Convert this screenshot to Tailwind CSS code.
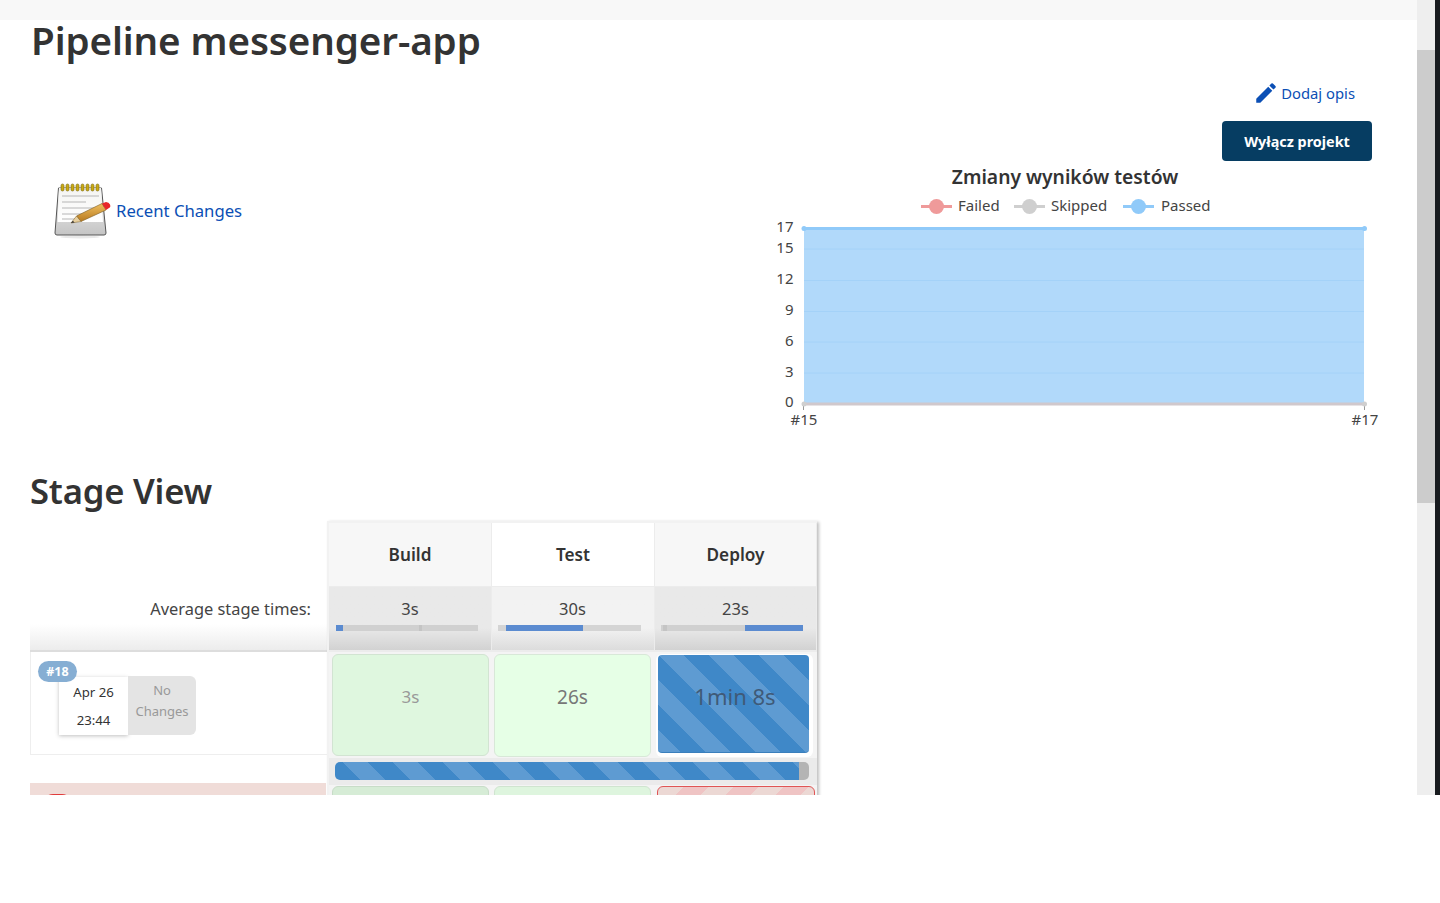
<!DOCTYPE html>
<html lang="pl">
<head>
    <meta charset="UTF-8">
    <meta name="viewport" content="width=device-width, initial-scale=1.0">
    <title>Pipeline messenger-app</title>
    <script src="https://cdn.jsdelivr.net/npm/@tailwindcss/browser@4"></script>
</head>
<body class="bg-white text-[#333] [font-family:'Noto_Sans',sans-serif]">
    <div class="flex h-[795px] overflow-hidden">
        <main class="w-[1417px] shrink-0">
            <div class="h-5 bg-[#f8f8f8]"></div>

            <h1 class="pl-[31px] h-[42px] text-[38.600px] leading-[40px] font-semibold tracking-[-0.1px]">Pipeline messenger-app</h1>

            <!-- Górna część: zmiany + wykres -->
            <div class="flex h-[368px]">
                <div class="w-[770px] pl-[54px] pt-[121px]">
                    <a href="#" class="flex items-center gap-[8px] text-[#0b4fb5] text-[16.700px] leading-[24px]">
                        <svg class="w-[54px] h-[56px] overflow-visible" viewBox="0 0 54 56">
                            <defs>
                                <linearGradient id="paper" x1="0" y1="0" x2="0" y2="1">
                                    <stop offset="0" stop-color="#f4f4f2"/>
                                    <stop offset="1" stop-color="#fff"/>
                                </linearGradient>
                                <linearGradient id="base" x1="0" y1="0" x2="0" y2="1">
                                    <stop offset="0" stop-color="#f6f6f6"/>
                                    <stop offset="1" stop-color="#c4c4c4"/>
                                </linearGradient>
                                <linearGradient id="pencil" x1="0" y1="0" x2="0" y2="1">
                                    <stop offset="0" stop-color="#f0c060"/>
                                    <stop offset="1" stop-color="#b87a20"/>
                                </linearGradient>
                            </defs>
                            <ellipse cx="26" cy="54" rx="20" ry="1.500" fill="#e8e8e8"/>
                            <path d="M4.500 5h43l4.500 45q0 2-2 2H3q-2 0-2-2z" fill="url(#base)" stroke="#555"/>
                            <path d="M5 5h42l2 34H3.500z" fill="url(#paper)"/>
                            <g fill="#c9a914" stroke="#7a6a10" stroke-width=".6">
                                <rect x="7" y="1" width="3" height="7" rx="1.500"/>
                                <rect x="12" y="1" width="3" height="7" rx="1.500"/>
                                <rect x="17" y="1" width="3" height="7" rx="1.500"/>
                                <rect x="22" y="1" width="3" height="7" rx="1.500"/>
                                <rect x="27" y="1" width="3" height="7" rx="1.500"/>
                                <rect x="32" y="1" width="3" height="7" rx="1.500"/>
                                <rect x="37" y="1" width="3" height="7" rx="1.500"/>
                                <rect x="42" y="1" width="3" height="7" rx="1.500"/>
                            </g>
                            <g stroke="#b5b5b5" stroke-width="1.200">
                                <path d="M8 13h37M8 19h24M8 25h37M8 31h28M8 36h20"/>
                            </g>
                            <path d="M22.500 33L48 20.500l4 6.500L27 38.500z" fill="url(#pencil)" stroke="#7a5a20" stroke-width=".6"/>
                            <path d="M17 40l5.500-7 4.500 5.500z" fill="#e8d0a0" stroke="#7a5a20" stroke-width=".5"/>
                            <path d="M17 40l1.800-2.300 1.800 1.700z" fill="#333"/>
                            <path d="M48 20.500l4-1.500q3 0 4 2.500t-1 3.500l-3 2z" fill="#e8262a"/>
                        </svg>
                        Recent Changes
                    </a>
                </div>
                <div class="w-[620px]">
                    <div class="flex justify-end pr-[35px] h-[44px] items-end">
                        <a href="#" class="flex items-center gap-[2px] text-[#0b4fb5] text-[14.800px] leading-[20px]">
                            <svg class="w-[26px] h-[26px]" viewBox="0 0 24 24" fill="#0b4fb5">
                                <path d="M3 17.250V21h3.750L17.810 9.940l-3.750-3.750L3 17.250zM20.710 7.040a1 1 0 000-1.410l-2.340-2.340a1 1 0 00-1.410 0l-1.830 1.830 3.750 3.750 1.830-1.830z"/>
                            </svg>
                            Dodaj opis
                        </a>
                    </div>
                    <div class="flex justify-end pr-[18px] mt-[15px]">
                        <button class="w-[150px] h-[40px] pt-[1px] rounded-[4px] bg-[#063d62] text-white text-[14.400px] font-bold">Wyłącz projekt</button>
                    </div>
                    <svg class="block w-[620px] h-[270px] mt-[-1px]" viewBox="770 160 620 270" fill="#444" font-size="15">
                        <text x="1065" y="184" text-anchor="middle" font-size="19.300" font-weight="600" fill="#333">Zmiany wyników testów</text>

                        <path d="M921 206.500h31" stroke="#ef9a9a" stroke-width="3"/>
                        <circle cx="936.500" cy="206.500" r="7.500" fill="#ef9a9a"/>
                        <text x="958" y="211">Failed</text>
                        <path d="M1014 206.500h31" stroke="#cfcfcf" stroke-width="3"/>
                        <circle cx="1029.500" cy="206.500" r="7.500" fill="#cfcfcf"/>
                        <text x="1051" y="211">Skipped</text>
                        <path d="M1123 206.500h31" stroke="#90caf9" stroke-width="3"/>
                        <circle cx="1138.500" cy="206.500" r="7.500" fill="#90caf9"/>
                        <text x="1161" y="211">Passed</text>

                        <rect x="804" y="228" width="560" height="176" fill="#b1d9fa"/>
                        <path d="M804 249h560M804 280.500h560M804 311.500h560M804 342h560M804 373h560" stroke="#a4d2f8"/>
                        <path d="M804 228.500h560" stroke="#90caf9" stroke-width="3"/>
                        <path d="M804 404h560" stroke="#d0c8cc" stroke-width="3"/>
                        <path d="M803.500 404v6M1364.500 404v6" stroke="#999"/>
                        <circle cx="804" cy="228.500" r="2.500" fill="#90caf9"/>
                        <circle cx="1364.500" cy="228.500" r="2.500" fill="#90caf9"/>
                        <circle cx="804" cy="404" r="2.500" fill="#cfcfcf"/>
                        <circle cx="1364.500" cy="404" r="2.500" fill="#cfcfcf"/>

                        <g text-anchor="end">
                            <text x="793.500" y="232">17</text>
                            <text x="793.500" y="253">15</text>
                            <text x="793.500" y="284">12</text>
                            <text x="793.500" y="315">9</text>
                            <text x="793.500" y="346">6</text>
                            <text x="793.500" y="377">3</text>
                            <text x="793.500" y="407">0</text>
                        </g>
                        <text x="804" y="425" text-anchor="middle">#15</text>
                        <text x="1365" y="425" text-anchor="middle">#17</text>
                    </svg>
                </div>
            </div>

            <h2 class="pl-[30px] mt-[40px] h-[51px] text-[34.600px] leading-[42px] font-semibold tracking-[-0.2px]">Stage View</h2>

            <!-- Stage view -->
            <div class="flex pl-[30px]">
                <div class="w-[297px] shrink-0">
                    <div class="h-[131px] pt-[66px] pr-[16px] text-right text-[16.400px] leading-[44px] text-[#444] bg-gradient-to-b from-white from-[80%] to-[#ececec] border-b-2 border-[#ddd]">Average stage times:</div>
                    <div class="relative h-[103px] border-l border-b border-[#eee]">
                        <span class="absolute left-[7px] top-[9px] z-10 w-[39px] h-[21px] rounded-full bg-[#86aed3] text-white text-[12.500px] leading-[21px] font-bold text-center">#18</span>
                        <div class="flex pl-[28px] pt-[24px]">
                            <div class="mt-[1px] w-[69px] h-[58px] bg-white shadow-[0_1px_4px_rgba(0,0,0,0.25)] text-[13.200px] text-center leading-[28px] pt-[1px]">
                                <div>Apr 26</div>
                                <div>23:44</div>
                            </div>
                            <div class="w-[68px] h-[59px] rounded-r-[6px] bg-[#e4e4e4] text-[#999] text-[13px] leading-[21px] text-center pt-[4px]">No<br>Changes</div>
                        </div>
                    </div>
                    <div class="relative mt-[28px] h-[40px] bg-[#f0dcd8] mr-[1px]">
                        <span class="absolute left-[13px] top-[11px] w-[29px] h-[20px] rounded-full bg-[#e03c3c]"></span>
                    </div>
                </div>

                <div class="w-[490px] shrink-0 border-t-2 border-l-2 border-[#f2f2f2] bg-[#ececec] shadow-[2px_1px_3px_rgba(0,0,0,0.25)]">
                    <!-- nagłówki -->
                    <div class="flex gap-px h-[63px] text-[17.200px] leading-[63px] font-semibold text-center">
                        <div class="w-[162px] bg-[#f7f7f7]">Build</div>
                        <div class="w-[162px] bg-white">Test</div>
                        <div class="w-[161px] bg-[#f7f7f7]">Deploy</div>
                    </div>
                    <!-- średnie czasy -->
                    <div class="flex gap-px mt-px h-[63px] text-[16.500px] text-[#444] text-center">
                        <div class="w-[162px] pt-[10px] pl-[7px] pr-[13px] bg-gradient-to-b from-[#e9e9e9] from-[65%] to-[#d2d2d2]">
                            <div class="leading-[24px] mr-[-6px]">3s</div>
                            <div class="relative mt-[4px] h-[6px] bg-[#d0d0d0]">
                                <div class="absolute left-[83px] w-[3px] h-full bg-[#c4c4c4]"></div>
                                <div class="w-[7px] h-full bg-[#5b8bd0]"></div>
                            </div>
                        </div>
                        <div class="w-[162px] pt-[10px] pl-[6px] pr-[13px] bg-gradient-to-b from-[#f2f2f2] from-[65%] to-[#dcdcdc]">
                            <div class="leading-[24px] mr-[-6px]">30s</div>
                            <div class="relative mt-[4px] h-[6px] bg-[#d4d4d4]">
                                <div class="ml-[8px] w-[77px] h-full bg-[#5b8bd0]"></div>
                            </div>
                        </div>
                        <div class="w-[161px] pt-[10px] pl-[6px] pr-[13px] bg-gradient-to-b from-[#e9e9e9] from-[65%] to-[#d2d2d2]">
                            <div class="leading-[24px] mr-[-7px]">23s</div>
                            <div class="relative mt-[4px] h-[6px] bg-[#d0d0d0]">
                                <div class="absolute left-[2px] w-[4px] h-full bg-[#c4c4c4]"></div>
                                <div class="ml-[84px] w-[58px] h-full bg-[#5b8bd0]"></div>
                            </div>
                        </div>
                    </div>
                    <!-- build #18 -->
                    <div class="flex gap-px mt-[2px] h-[106px] bg-[#f4f4f4] text-center">
                        <div class="w-[162px] pl-[3px] pr-[2px] pt-[2px]">
                            <div class="h-[102px] rounded-[6px] bg-[#dff7df] border border-[#d2e4d2] text-[#999] text-[17px] leading-[84px]">3s</div>
                        </div>
                        <div class="w-[162px] pl-[2px] pr-[3px] pt-[2px]">
                            <div class="h-[103px] rounded-[6px] bg-[#e6ffe6] border border-[#d8e8d8] text-[#777] text-[19px] leading-[84px]">26s</div>
                        </div>
                        <div class="w-[161px] pl-[1px] pr-[3px] pt-[2px]">
                            <div class="h-[103px] rounded-[6px] bg-white pl-[2px] pr-[4px] pt-[1px]">
                                <div class="h-[98px] pl-[3px] rounded-[4px] bg-[repeating-linear-gradient(45deg,#5e9bd2_0_15.600px,#3f88c8_15.600px_33.300px,#5e9bd2_33.300px_35.400px)] border-b border-[#3a7fbc] text-[#3f5a78] text-[22px] leading-[82px]">1min 8s</div>
                            </div>
                        </div>
                    </div>
                    <!-- pasek postępu -->
                    <div class="h-[27px] pl-[6px] pr-[8px] pt-[4px] bg-[#ebebeb]">
                        <div class="flex h-[18px] rounded-[5px] overflow-hidden">
                            <div class="flex-1 bg-[repeating-linear-gradient(45deg,#3f88c8_0_17.700px,#5e9bd2_17.700px_35.400px)]"></div>
                            <div class="w-[10px] bg-[#b4b4b4]"></div>
                        </div>
                    </div>
                    <!-- build #17 -->
                    <div class="flex gap-px h-[40px] bg-[#f4f4f4]">
                        <div class="w-[162px] pl-[3px] pr-[2px] pt-[1px]">
                            <div class="h-[30px] rounded-[6px] bg-[#d6ecd6] border border-[#c8dcc8]"></div>
                        </div>
                        <div class="w-[162px] pl-[2px] pr-[3px] pt-[1px]">
                            <div class="h-[30px] rounded-[6px] bg-[#def5de] border border-[#d0e4d0]"></div>
                        </div>
                        <div class="w-[161px] pl-[2px] pr-[1px] pt-[1px]">
                            <div class="h-[30px] rounded-[6px] border border-[#e05555] bg-[repeating-linear-gradient(135deg,#ecd8d4_0_17.700px,#efc4c4_17.700px_35.400px)]"></div>
                        </div>
                    </div>
                </div>
            </div>
        </main>

        <!-- pasek przewijania -->
        <div class="w-[18px] shrink-0 bg-[#eeeeee]">
            <div class="mt-[50px] h-[453px] bg-[#cccccc]"></div>
        </div>
        <div class="w-[5px] shrink-0 bg-[#181b1f]"></div>
    </div>
</body>
</html>
